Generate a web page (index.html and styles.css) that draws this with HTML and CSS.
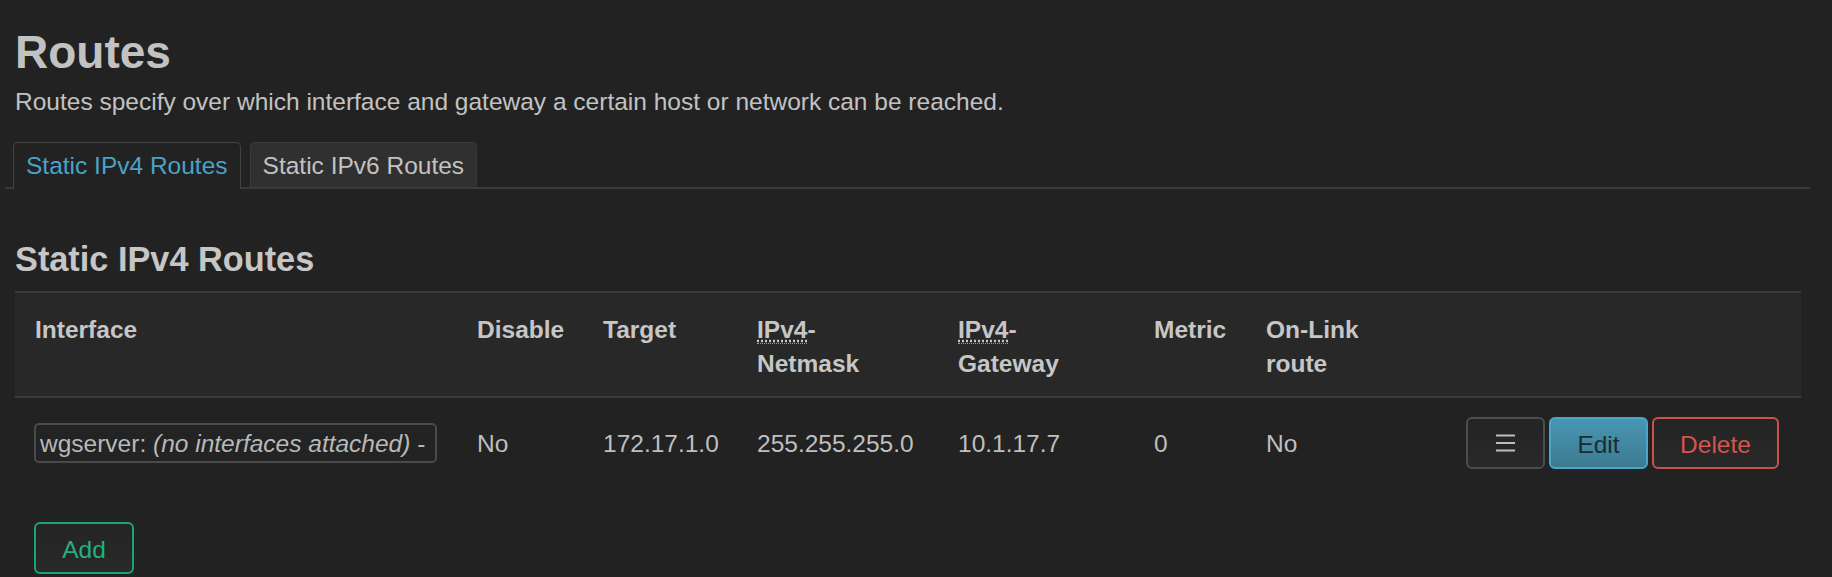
FILE: index.html
```html
<!DOCTYPE html>
<html lang="en">
<head>
    <meta charset="UTF-8">
    <title>Routes</title>
    <link rel="stylesheet" href="styles.css">
</head>
<body>
    <div class="page">
        <h2 class="title">Routes</h2>
        <div class="descr">Routes specify over which interface and gateway a certain host or network can be reached.</div>
        <ul class="tabs">
            <li class="active">Static IPv4 Routes</li>
            <li>Static IPv6 Routes</li>
        </ul>
        <h3>Static IPv4 Routes</h3>
        <table class="routes">
            <colgroup>
                <col style="width: 442px"><col style="width: 126px"><col style="width: 154px"><col style="width: 201px">
                <col style="width: 196px"><col style="width: 112px"><col style="width: 150px"><col>
            </colgroup>
            <thead>
                <tr>
                    <th>Interface</th>
                    <th>Disable</th>
                    <th>Target</th>
                    <th><abbr title="Internet Protocol Version 4">IPv4</abbr>-<br>Netmask</th>
                    <th><abbr title="Internet Protocol Version 4">IPv4</abbr>-<br>Gateway</th>
                    <th>Metric</th>
                    <th>On-Link<br>route</th>
                    <th></th>
                </tr>
            </thead>
            <tbody>
                <tr>
                    <td><div class="dropdown">wgserver: <em>(no interfaces attached)</em> -</div></td>
                    <td>No</td>
                    <td>172.17.1.0</td>
                    <td>255.255.255.0</td>
                    <td>10.1.17.7</td>
                    <td>0</td>
                    <td>No</td>
                    <td class="actions">
                        <button class="btn btn-drag" title="Drag to reorder">
                            <svg width="19" height="18" viewBox="0 0 19 18"><path d="M0 1.5h19M0 9h19M0 16.5h19" stroke="#bdbdbd" stroke-width="2.2"/></svg>
                        </button>
                        <button class="btn btn-edit">Edit</button>
                        <button class="btn btn-delete">Delete</button>
                    </td>
                </tr>
            </tbody>
        </table>
        <div class="create">
            <button class="btn btn-add">Add</button>
        </div>
    </div>
</body>
</html>
```

FILE: styles.css
```css
html, body { margin: 0; padding: 0; background-color: #222222; }
body { font-family: "Liberation Sans", Arial, sans-serif; font-size: 24.5px; color: #bfbfbf; }
.page { padding: 25px 31px 0 15px; }
.title { margin: 0; font-size: 46px; line-height: 54px; font-weight: bold; color: #c2c2c2; }
.descr { margin-top: 5.5px; line-height: 34px; color: #c2c2c2; }
.tabs { display: flex; align-items: flex-end; list-style: none; margin: 23.5px -9px 0 -10px; padding: 0 0 0 8px; height: 45px; border-bottom: 2px solid #3a3a3a; }
.tabs li { padding: 2px 12px 0; line-height: 42px; border: 1px solid #3a3a3a; border-bottom: none; border-radius: 5px 5px 0 0; background-color: #303030; color: #c2c2c2; margin-right: 9px; cursor: pointer; }
.tabs li.active { background-color: #222222; color: #4aa2c8; border-color: #424242; padding-bottom: 2px; margin-bottom: -2px; }
h3 { margin: 50px 0 0; font-size: 34.3px; line-height: 40px; font-weight: bold; color: #c6c6c6; }
.routes { margin: 12px 0 0; width: 1786px; table-layout: fixed; border-collapse: separate; border-spacing: 0; }
.routes th { background-color: #282828; border-top: 2px solid #3b3b3b; border-bottom: 2px solid #3b3b3b; padding: 20px 16px 15px 20px; line-height: 34px; text-align: left; vertical-align: top; font-weight: bold; color: #c6c6c6; }
.routes td { padding: 19px 16px 20px 20px; line-height: 33px; vertical-align: middle; color: #bfbfbf; white-space: nowrap; }
.routes td.text { padding-top: 21px; }
abbr { text-decoration: underline dotted; border-bottom: 1px dotted #9a9a9a; cursor: help; }
.dropdown { box-sizing: border-box; width: 403px; height: 40px; margin-left: -1px; padding: 2px 4px 0; line-height: 34px; border: 2px solid #4a4a4a; border-radius: 5px; background-color: #232323; overflow: hidden; white-space: nowrap; color: #b8b8b8; }
.dropdown em { font-style: italic; }
.routes td.actions { padding-right: 22px; text-align: right; font-size: 0; }
.btn { box-sizing: border-box; height: 52px; padding: 3px 26px 0; line-height: 45px; border: 2px solid #4d4d4d; border-radius: 6px; background: linear-gradient(#242424, #292929); font-family: "Liberation Sans", Arial, sans-serif; font-size: 24.5px; color: #bfbfbf; cursor: pointer; vertical-align: middle; }
.actions .btn { margin-left: 4px; }
.btn-drag { width: 79px; padding: 0; line-height: 0; }
.btn-drag svg { display: inline-block; vertical-align: middle; }
.btn-edit { width: 99px; padding-left: 0; padding-right: 0; border-color: #4aa6cd; background: linear-gradient(#4996b1, #3b7b90); color: #1e2b31; }
.btn-delete { width: 127px; padding-left: 0; padding-right: 0; border-color: #c9514e; color: #d2564f; }
.create { padding: 33px 0 0 19px; }
.btn-add { width: 100px; padding-left: 0; padding-right: 0; border-color: #1ba577; color: #22b07e; }
```
